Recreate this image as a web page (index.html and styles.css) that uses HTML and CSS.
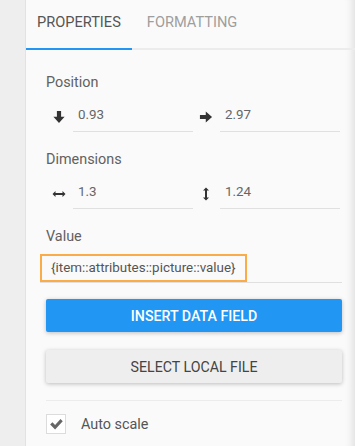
FILE: index.html
```html
<!DOCTYPE html>
<html lang="en">
<head>
  <meta charset="UTF-8" />
  <title>Properties</title>
  <link rel="stylesheet" href="styles.css">
</head>
<body>
  <div class="gutter"></div>

  <div class="panel">
    <!-- Pestañas -->
    <div class="tabs">
      <div class="tab active">PROPERTIES</div>
      <div class="tab">FORMATTING</div>
    </div>

    <div class="content">
      <div class="label">Position</div>
      <div class="pair">
        <div class="cell">
          <svg class="icon" viewBox="0 0 12 12"><path d="M4.2 0.8h3.6v5h3L6 11.2 1.2 5.8h3z"/></svg>
          <div class="field">0.93</div>
        </div>
        <div class="cell">
          <svg class="icon" viewBox="0 0 12 12"><path d="M0.8 4.2h5v-3L11.2 6 5.8 10.8v-3h-5z"/></svg>
          <div class="field">2.97</div>
        </div>
      </div>

      <div class="label">Dimensions</div>
      <div class="pair">
        <div class="cell">
          <svg class="icon" viewBox="0 0 14 14"><path d="M0.5 7l3-3v2h7V4l3 3-3 3V8h-7v2z"/></svg>
          <div class="field">1.3</div>
        </div>
        <div class="cell">
          <svg class="icon" viewBox="0 0 14 14"><path d="M7 0.5l3 3H8v7h2l-3 3-3-3h2v-7H4z"/></svg>
          <div class="field">1.24</div>
        </div>
      </div>

      <div class="label">Value</div>
      <div class="value-field">
        <span class="highlight">{item::attributes::picture::value}</span>
      </div>

      <button class="btn primary">INSERT DATA FIELD</button>
      <button class="btn">SELECT LOCAL FILE</button>

      <div class="divider"></div>

      <label class="check-row">
        <span class="checkbox">
          <svg viewBox="0 0 20 20"><path d="M3.5 10.5l2.5-2.5 3 3 6-6.5 2.5 2.5-8.5 9z"/></svg>
        </span>
        Auto scale
      </label>
    </div>
  </div>
</body>
</html>
```

FILE: styles.css
```css
/* Panel de propiedades */
body {
  margin: 0;
  display: flex;
  height: 100vh;
  background: #eeeeee;
  font-family: Roboto, 'Liberation Sans', sans-serif;
  overflow: hidden;
}

.gutter {
  width: 25px;
  border-right: 1px solid #e2e2e2;
}

.panel {
  flex: 1;
  background: #fafafa;
  box-shadow: inset -10px 0 8px -8px rgba(0,0,0,0.12);
}

.tabs {
  display: flex;
  height: 48px;
  border-bottom: 2px solid #ececec;
}

.tab {
  padding: 0 11px;
  margin-right: 4px;
  font-size: 14.6px;
  line-height: 45px;
  color: #9e9e9e;
  margin-bottom: -2px;
  border-bottom: 2px solid transparent;
}

.tab.active {
  color: #555;
  border-bottom-color: #2196f3;
}

.content {
  padding: 25px 13px 0 20px;
}

.label {
  font-size: 14.4px;
  line-height: 16px;
  color: #616161;
}

.pair {
  display: grid;
  grid-template-columns: 1fr 1fr;
  margin: 10px 2px 20px 0;
}

.cell {
  display: flex;
  align-items: center;
}

.icon {
  width: 14px;
  height: 14px;
  margin: 0 7px 0 6px;
  fill: #333;
}

.field {
  flex: 1;
  height: 30px;
  line-height: 28px;
  padding-left: 5px;
  font-size: 13.4px;
  color: #666;
  border-bottom: 1px solid #e0e0e0;
}

.value-field {
  margin: 9px 0 16px -6px;
  border-bottom: 1px solid #e0e0e0;
  height: 28px;
}

.highlight {
  display: inline-block;
  border: 2px solid #fbab48;
  padding: 4px 9px;
  font-size: 13.4px;
  line-height: 16px;
  color: #555;
}

.btn {
  display: block;
  width: 100%;
  height: 33px;
  margin-bottom: 18px;
  border: none;
  border-radius: 2px;
  background: #eeeeee;
  color: #444;
  font-family: Roboto, 'Liberation Sans', sans-serif;
  font-size: 14.2px;
  box-shadow: 0 1px 4px rgba(0,0,0,0.25);
}

.btn.primary {
  background: #2196f3;
  color: #fff;
  font-weight: 500;
}

.divider {
  height: 1px;
  background: #ececec;
  margin-top: -1px;
  margin-bottom: 13px;
}

.check-row {
  display: flex;
  align-items: center;
  gap: 15px;
  font-size: 14.4px;
  color: #555;
}

.checkbox {
  width: 18px;
  height: 18px;
  border: 1px solid #dcdcdc;
  background: #fff;
}

.checkbox svg {
  width: 18px;
  height: 18px;
  fill: #666;
}
```
